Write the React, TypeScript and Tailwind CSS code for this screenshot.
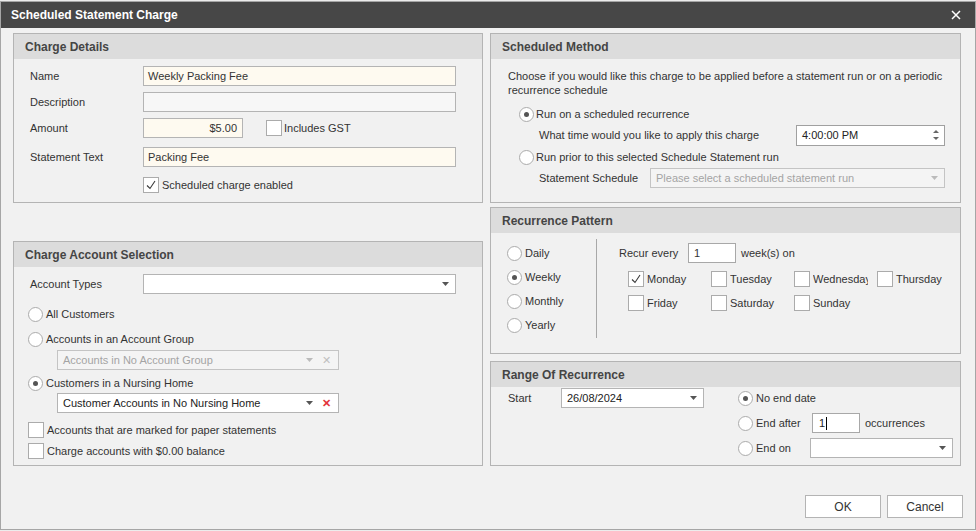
import React from "react";

const Radio = ({ checked }: { checked?: boolean }) => (
  <span className="flex h-[15px] w-[15px] shrink-0 items-center justify-center rounded-full border border-[#ababab] bg-white">
    {checked && <span className="h-[5px] w-[5px] rounded-full bg-[#555]" />}
  </span>
);

const Check = ({ checked }: { checked?: boolean }) => (
  <span className="flex h-[16px] w-[16px] shrink-0 items-center justify-center border border-[#ababab] bg-white">
    {checked && (
      <svg width="14" height="14" viewBox="0 0 14 14">
        <polyline points="3,7.5 6,10.5 11,3" fill="none" stroke="#3a3a3a" strokeWidth="1.1" />
      </svg>
    )}
  </span>
);

const Arrow = ({ color = "#555" }: { color?: string }) => (
  <svg width="7" height="4" viewBox="0 0 7 4" className="shrink-0">
    <polygon points="0,0 7,0 3.5,4" fill={color} />
  </svg>
);

const Panel = ({ title, className, children }: { title: string; className: string; children: React.ReactNode }) => (
  <div className={`flex flex-col border border-[#b4b4b4] ${className}`}>
    <div className="flex h-[25px] shrink-0 items-center bg-[#dcdcdc] pl-[11px] text-[12px] font-bold text-[#454545]">{title}</div>
    {children}
  </div>
);

export default function App() {
  return (
    <div className="h-[531px] w-[976px] overflow-hidden bg-[#ececec] pt-[1px] font-['Liberation_Sans',Arial,sans-serif] text-[11px] text-[#333]">
      <div className="flex h-[529px] w-[976px] flex-col border border-[#a6a6a6] bg-[#f1f1f1]">
        {/* title bar */}
        <div className="flex h-[26px] shrink-0 items-center justify-between bg-[#474747] pl-[10px] pr-[14px]">
          <span className="text-[12px] font-bold text-white">Scheduled Statement Charge</span>
          <svg width="10" height="10" viewBox="0 0 10 10">
            <path d="M1 1L9 9M9 1L1 9" stroke="#fff" strokeWidth="1.5" />
          </svg>
        </div>

        <div className="flex gap-[7px] pl-[12px] pt-[5px]">
          {/* left column */}
          <div className="flex w-[470px] flex-col gap-[38px]">
            <Panel title="Charge Details" className="h-[170px]">
              <div className="flex flex-col pl-[16px] pr-[26px] pt-[7px]">
                <div className="flex h-[20px] items-center">
                  <span className="w-[113px]">Name</span>
                  <div className="flex h-[20px] flex-1 items-center border border-[#b4b4b4] bg-[#fefaf0] px-[4px]">Weekly Packing Fee</div>
                </div>
                <div className="mt-[6px] flex h-[20px] items-center">
                  <span className="w-[113px]">Description</span>
                  <div className="h-[20px] flex-1 border border-[#b4b4b4] bg-[#f7f7f7]" />
                </div>
                <div className="mt-[6px] flex h-[20px] items-center">
                  <span className="w-[113px]">Amount</span>
                  <div className="flex h-[20px] w-[100px] items-center justify-end border border-[#b4b4b4] bg-[#fefaf0] px-[5px]">$5.00</div>
                  <span className="ml-[23px] flex items-center gap-[2px]">
                    <Check />
                    Includes GST
                  </span>
                </div>
                <div className="mt-[9px] flex h-[20px] items-center">
                  <span className="w-[113px]">Statement Text</span>
                  <div className="flex h-[20px] flex-1 items-center border border-[#b4b4b4] bg-[#fefaf0] px-[4px]">Packing Fee</div>
                </div>
                <div className="mt-[10px] flex h-[16px] items-center gap-[3px] pl-[113px]">
                  <Check checked />
                  Scheduled charge enabled
                </div>
              </div>
            </Panel>

            <Panel title="Charge Account Selection" className="h-[225px]">
              <div className="flex flex-col pl-[14px] pr-[26px] pt-[7px]">
                <div className="flex h-[20px] items-center pl-[2px]">
                  <span className="w-[113px]">Account Types</span>
                  <div className="flex h-[20px] flex-1 items-center justify-end border border-[#b4b4b4] bg-white pr-[6px]">
                    <Arrow />
                  </div>
                </div>
                <div className="mt-[12px] flex h-[16px] items-center gap-[3px]">
                  <Radio />
                  All Customers
                </div>
                <div className="mt-[9px] flex h-[16px] items-center gap-[3px]">
                  <Radio />
                  Accounts in an Account Group
                </div>
                <div className="ml-[29px] mt-[3px] flex h-[20px] w-[282px] items-center border border-[#c4c4c4] bg-[#f4f4f4] pl-[5px] pr-[7px] text-[#a4a4a4]">
                  <span className="flex-1">Accounts in No Account Group</span>
                  <Arrow color="#bbb" />
                  <span className="ml-[9px] text-[11px] leading-none text-[#c0c0c0]">✕</span>
                </div>
                <div className="mt-[5px] flex h-[16px] items-center gap-[3px]">
                  <Radio checked />
                  Customers in a Nursing Home
                </div>
                <div className="ml-[29px] mt-[2px] flex h-[20px] w-[282px] items-center border border-[#b4b4b4] bg-white pl-[5px] pr-[7px] text-[#222]">
                  <span className="flex-1">Customer Accounts in No Nursing Home</span>
                  <Arrow />
                  <span className="ml-[9px] text-[11px] font-bold leading-none text-[#e3343b]">✕</span>
                </div>
                <div className="mt-[9px] flex h-[16px] items-center gap-[3px]">
                  <Check />
                  Accounts that are marked for paper statements
                </div>
                <div className="mt-[5px] flex h-[16px] items-center gap-[3px]">
                  <Check />
                  Charge accounts with $0.00 balance
                </div>
              </div>
            </Panel>
          </div>

          {/* right column */}
          <div className="flex w-[471px] flex-col">
            <Panel title="Scheduled Method" className="h-[170px]">
              <div className="flex flex-col pl-[17px] pr-[15px] pt-[10px]">
                <p className="leading-[14px]">
                  Choose if you would like this charge to be applied before a statement run or on a periodic recurrence schedule
                </p>
                <div className="ml-[11px] mt-[9px] flex h-[16px] items-center gap-[2px]">
                  <Radio checked />
                  Run on a scheduled recurrence
                </div>
                <div className="ml-[31px] mt-[3px] flex h-[20px] items-center justify-between">
                  <span>What time would you like to apply this charge</span>
                  <div className="flex h-[21px] w-[149px] items-center justify-between border border-[#a0a0a0] bg-white pl-[5px] pr-[5px] text-[#222]">
                    4:00:00 PM
                    <svg width="6" height="12" viewBox="0 0 6 12">
                      <polygon points="0,4 6,4 3,1" fill="#666" />
                      <polygon points="0,8 6,8 3,11" fill="#666" />
                    </svg>
                  </div>
                </div>
                <div className="ml-[11px] mt-[4px] flex h-[16px] items-center gap-[2px]">
                  <Radio />
                  Run prior to this selected Schedule Statement run
                </div>
                <div className="ml-[31px] mt-[3px] flex h-[20px] items-center">
                  <span className="w-[111px]">Statement Schedule</span>
                  <div className="flex h-[20px] flex-1 items-center justify-between border border-[#c4c4c4] bg-[#f4f4f4] pl-[5px] pr-[6px] text-[#a4a4a4]">
                    Please select a scheduled statement run
                    <Arrow color="#bbb" />
                  </div>
                </div>
              </div>
            </Panel>

            <Panel title="Recurrence Pattern" className="mt-[4px] h-[147px]">
              <div className="flex pt-[6px]">
                <div className="flex w-[105px] flex-col gap-[8px] pl-[16px] pt-[6px]">
                  {["Daily", "Weekly", "Monthly", "Yearly"].map((d) => (
                    <div key={d} className="flex h-[16px] items-center gap-[3px]">
                      <Radio checked={d === "Weekly"} />
                      {d}
                    </div>
                  ))}
                </div>
                <div className="h-[99px] w-px bg-[#a8a8a8]" />
                <div className="flex flex-col pl-[22px] pt-[4px]">
                  <div className="flex h-[20px] items-center">
                    <span className="w-[69px]">Recur every</span>
                    <div className="flex h-[20px] w-[48px] items-center border border-[#a8a8a8] bg-white pl-[5px]">1</div>
                    <span className="ml-[5px]">week(s) on</span>
                  </div>
                  <div className="ml-[9px] mt-[8px] grid grid-cols-[83px_83px_83px_83px] gap-y-[8px]">
                    {["Monday", "Tuesday", "Wednesday", "Thursday", "Friday", "Saturday", "Sunday"].map((d) => (
                      <div key={d} className="flex h-[16px] items-center gap-[3px]">
                        <Check checked={d === "Monday"} />
                        <span className={`whitespace-nowrap ${d === "Thursday" ? "" : "w-[55px] overflow-hidden"}`}>{d}</span>
                      </div>
                    ))}
                  </div>
                </div>
              </div>
            </Panel>

            <Panel title="Range Of Recurrence" className="mt-[7px] h-[105px]">
              <div className="flex pl-[17px] pt-[1px]">
                <div className="flex h-[20px] items-center">
                  <span className="w-[53px]">Start</span>
                  <div className="flex h-[20px] w-[143px] items-center justify-between border border-[#b4b4b4] bg-white pl-[5px] pr-[6px] text-[#222]">
                    26/08/2024
                    <Arrow />
                  </div>
                </div>
                <div className="ml-[34px] flex flex-col">
                  <div className="mt-[2px] flex h-[16px] items-center gap-[3px]">
                    <Radio checked />
                    No end date
                  </div>
                  <div className="mt-[7px] flex h-[20px] items-center">
                    <Radio />
                    <span className="ml-[3px] w-[56px]">End after</span>
                    <div className="flex h-[20px] w-[48px] items-center border border-[#a8a8a8] bg-white pl-[6px] text-[#222]">
                      1<span className="ml-px h-[13px] w-px bg-black" />
                    </div>
                    <span className="ml-[5px]">occurrences</span>
                  </div>
                  <div className="mt-[5px] flex h-[20px] items-center">
                    <Radio />
                    <span className="ml-[3px] w-[54px]">End on</span>
                    <div className="flex h-[20px] w-[143px] items-center justify-end border border-[#b4b4b4] bg-white pr-[6px]">
                      <Arrow />
                    </div>
                  </div>
                </div>
              </div>
            </Panel>
          </div>
        </div>

        {/* buttons */}
        <div className="mt-[29px] flex justify-end gap-[6px] pr-[12px]">
          <button className="h-[23px] w-[76px] border border-[#b4b4b4] bg-white text-[12px] text-[#333]">OK</button>
          <button className="h-[23px] w-[76px] border border-[#b4b4b4] bg-white text-[12px] text-[#333]">Cancel</button>
        </div>
      </div>
    </div>
  );
}
